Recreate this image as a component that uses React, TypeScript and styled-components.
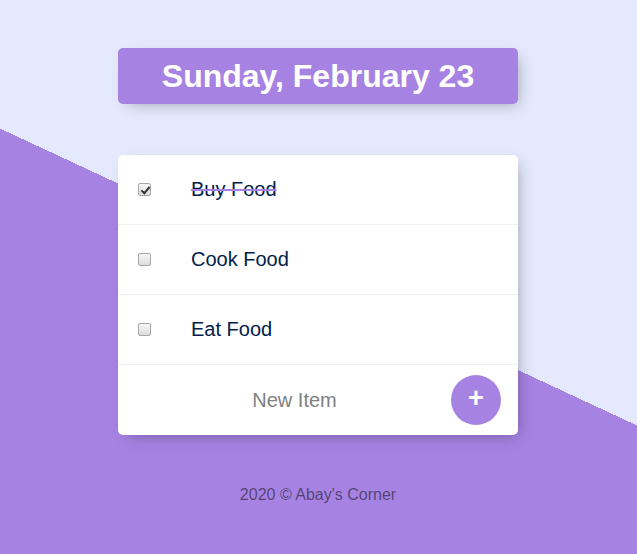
import React, { useState } from 'react';
import styled, { createGlobalStyle } from 'styled-components';

const GlobalStyle = createGlobalStyle`
  html {
    min-height: 100%;
    background-color: #E4E9FD;
    background-image: linear-gradient(25deg, #A683E3 50%, #E4E9FD 50%);
    font-family: 'Liberation Sans', Arial, sans-serif;
  }
  body {
    margin: 0;
    padding: 48px 1px 0 0;
  }
`;

const Box = styled.div`
  width: 400px;
  margin: 0 auto 51px;
  background: #fff;
  border-radius: 5px;
  box-shadow: 5px 5px 15px -5px rgba(0, 0, 0, 0.3);
  overflow: hidden;
`;

const Heading = styled(Box)`
  background-color: #A683E3;
  text-align: center;
`;

const Title = styled.h1`
  margin: 0;
  padding: 10px 10px 9px;
  height: 37px;
  line-height: 37px;
  font-size: 32px;
  font-weight: 700;
  color: #fff;
`;

const Item = styled.div`
  height: 70px;
  display: flex;
  align-items: center;
  border-bottom: 1px solid #f1f1f1;
  box-sizing: border-box;
  &:last-child {
    border-bottom: 0;
  }
`;

const Check = styled.input`
  appearance: none;
  margin: 0 20px;
  width: 13px;
  height: 13px;
  box-sizing: border-box;
  border: 1px solid #a6a6a6;
  border-radius: 2px;
  background: linear-gradient(#f7f7f7, #dcdcdc);
  position: relative;
  cursor: pointer;
  &:checked::after {
    content: '';
    position: absolute;
    left: 3.5px;
    top: 0.5px;
    width: 3px;
    height: 7px;
    border: solid #333;
    border-width: 0 2px 2px 0;
    transform: rotate(40deg);
  }
`;

const Label = styled.p<{ $done: boolean }>`
  margin: 0;
  padding: 20px;
  font-size: 20px;
  font-weight: 400;
  color: #00204a;
  text-decoration: ${(p) => (p.$done ? 'line-through' : 'none')};
  text-decoration-color: #A683E3;
  text-decoration-thickness: 2px;
`;

const Form = styled.form`
  display: flex;
  align-items: center;
  margin-left: 20px;
`;

const NewInput = styled.input`
  text-align: center;
  height: 60px;
  width: 313px;
  padding: 0;
  border: none;
  background: transparent;
  font-family: inherit;
  font-size: 20px;
  color: #00204a;
  &::placeholder {
    color: grey;
    opacity: 1;
  }
  &:focus {
    outline: none;
    box-shadow: inset 0 -3px 0 0 #A683E3;
  }
`;

const AddButton = styled.button`
  width: 50px;
  height: 50px;
  border-radius: 50%;
  border: 0;
  padding: 0 0 4px;
  background-color: #A683E3;
  color: #fff;
  font-family: inherit;
  font-size: 27px;
  font-weight: 700;
  line-height: 44px;
  cursor: pointer;
`;

const Footer = styled.footer`
  text-align: center;
  font-size: 16px;
  color: rgba(0, 0, 0, 0.5);
  margin-top: 48px;
`;

const App: React.FC = () => {
  const [items, setItems] = useState([
    { name: 'Buy Food', done: true },
    { name: 'Cook Food', done: false },
    { name: 'Eat Food', done: false },
  ]);
  const [text, setText] = useState('');

  return (
    <>
      <GlobalStyle />
      <Heading>
        <Title>Sunday, February 23</Title>
      </Heading>
      <Box>
        {items.map((item, i) => (
          <Item key={item.name}>
            <Check
              type="checkbox"
              checked={item.done}
              onChange={() => {
                setItems(items.map((it, j) => (j === i ? { ...it, done: !it.done } : it)));
              }}
            />
            <Label $done={item.done}>{item.name}</Label>
          </Item>
        ))}
        <Item>
          <Form
            onSubmit={(e) => {
              e.preventDefault();
              if (text.trim()) {
                setItems([...items, { name: text.trim(), done: false }]);
                setText('');
              }
            }}
          >
            <NewInput
              type="text"
              placeholder="New Item"
              value={text}
              onChange={(e) => setText(e.target.value)}
            />
            <AddButton type="submit">+</AddButton>
          </Form>
        </Item>
      </Box>
      <Footer>2020 © Abay's Corner</Footer>
    </>
  );
};

export default App;
